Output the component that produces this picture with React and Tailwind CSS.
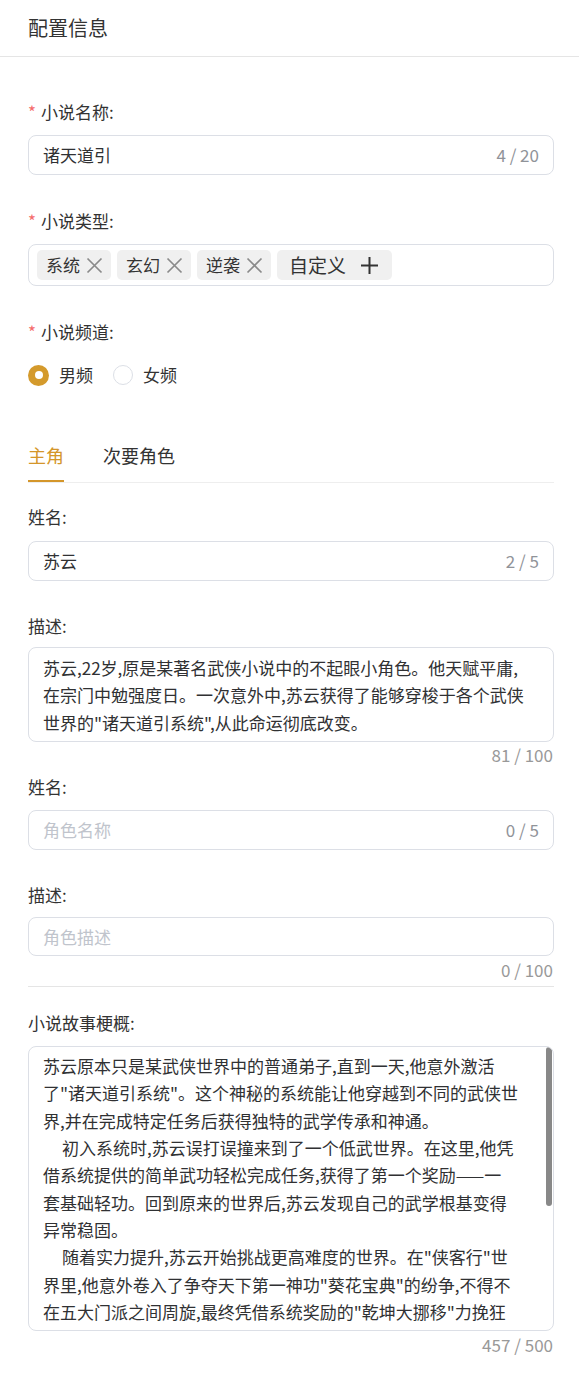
import React from "react";

const XIcon = () => (
  <svg width="17" height="17" viewBox="0 0 17 17" className="shrink-0">
    <path d="M1.5 1.5 L15.5 15.5 M15.5 1.5 L1.5 15.5" stroke="#8a8a8a" strokeWidth="1.7" fill="none" />
  </svg>
);

const PlusIcon = () => (
  <svg width="19" height="19" viewBox="0 0 19 19" className="shrink-0">
    <path d="M9.5 1 L9.5 18 M1 9.5 L18 9.5" stroke="#333333" strokeWidth="2" fill="none" />
  </svg>
);

const Label = ({ required, children, className = "" }) => (
  <div className={"h-[24px] leading-[24px] text-[17px] text-[#333] flex items-center " + className}>
    {required && <span className="text-[#f56c6c] mr-[5px] text-[17px]">*</span>}
    <span>{children}</span>
  </div>
);

const Input = ({ value, placeholder, count, className = "" }) => (
  <div
    className={
      "h-[40px] border border-[#dcdfe6] rounded-[8px] px-[14px] flex items-center justify-between text-[17px] " +
      className
    }
  >
    {value ? (
      <span className="text-[#303133]">{value}</span>
    ) : (
      <span className="text-[#c0c4cc]">{placeholder}</span>
    )}
    <span className="text-[#909399]">{count}</span>
  </div>
);

const Counter = ({ children, className = "" }) => (
  <div className={"h-[20px] leading-[20px] text-right text-[17px] text-[#999] pr-[1px] " + className}>{children}</div>
);

const Tag = ({ text }) => (
  <div className="h-[30px] w-[74px] rounded-[5px] bg-[#f0f0f0] pl-[9px] pr-[8px] flex items-center gap-[6px]">
    <span className="text-[17px] text-[#333] leading-[30px]">{text}</span>
    <XIcon />
  </div>
);

const descLines = [
  "苏云,22岁,原是某著名武侠小说中的不起眼小角色。他天赋平庸,",
  "在宗门中勉强度日。一次意外中,苏云获得了能够穿梭于各个武侠",
  "世界的\"诸天道引系统\",从此命运彻底改变。",
];

const storyLines = [
  { t: "苏云原本只是某武侠世界中的普通弟子,直到一天,他意外激活" },
  { t: "了\"诸天道引系统\"。这个神秘的系统能让他穿越到不同的武侠世" },
  { t: "界,并在完成特定任务后获得独特的武学传承和神通。" },
  { t: "初入系统时,苏云误打误撞来到了一个低武世界。在这里,他凭", indent: true },
  { t: "借系统提供的简单武功轻松完成任务,获得了第一个奖励——一" },
  { t: "套基础轻功。回到原来的世界后,苏云发现自己的武学根基变得" },
  { t: "异常稳固。" },
  { t: "随着实力提升,苏云开始挑战更高难度的世界。在\"侠客行\"世", indent: true },
  { t: "界里,他意外卷入了争夺天下第一神功\"葵花宝典\"的纷争,不得不" },
  { t: "在五大门派之间周旋,最终凭借系统奖励的\"乾坤大挪移\"力挽狂" },
];

export default function App() {
  return (
    <div className="w-[579px] min-h-[1387px] bg-white font-['Noto_Sans_CJK_SC','Noto_Sans',sans-serif] text-[#333]">
      <div className="h-[57px] border-b border-[#e5e5e5] flex items-center pl-[28px] text-[20px] text-[#333]">
        配置信息
      </div>

      <div className="pl-[28px] pr-[25px] pb-[30px]">
        <Label required className="mt-[43px]">小说名称:</Label>
        <Input value="诸天道引" count="4 / 20" className="mt-[11px]" />

        <Label required className="mt-[34px]">小说类型:</Label>
        <div className="mt-[11px] h-[42px] border border-[#dcdfe6] rounded-[8px] px-[8px] flex items-center gap-[6px]">
          <Tag text="系统" />
          <Tag text="玄幻" />
          <Tag text="逆袭" />
          <div className="h-[30px] rounded-[5px] bg-[#f0f0f0] pl-[12px] pr-[13px] flex items-center gap-[14px]">
            <span className="text-[19px] text-[#333] leading-[30px]">自定义</span>
            <PlusIcon />
          </div>
        </div>

        <Label required className="mt-[34px]">小说频道:</Label>
        <div className="mt-[19px] h-[24px] flex items-center gap-[20px] text-[17px]">
          <div className="flex items-center gap-[10px]">
            <div className="w-[21px] h-[21px] rounded-full bg-[#d49a2c] flex items-center justify-center">
              <div className="w-[8px] h-[8px] rounded-full bg-white" />
            </div>
            <span className="text-[#333]">男频</span>
          </div>
          <div className="flex items-center gap-[10px]">
            <div className="w-[20px] h-[20px] rounded-full border border-[#dcdfe6] bg-white" />
            <span className="text-[#333]">女频</span>
          </div>
        </div>

        <div className="mt-[56px] flex gap-[39px] border-b border-[#eeeeee]">
          <div className="h-[39px] border-b-2 border-[#d4962a] -mb-px text-[18px] leading-[24px] text-[#d4962a]">
            主角
          </div>
          <div className="h-[39px] text-[18px] leading-[24px] text-[#333]">次要角色</div>
        </div>

        <Label className="mt-[22px]">姓名:</Label>
        <Input value="苏云" count="2 / 5" className="mt-[12px]" />

        <Label className="mt-[33px]">描述:</Label>
        <div className="mt-[9px] h-[95px] border border-[#dcdfe6] rounded-[8px] px-[14px] pt-[6px] overflow-hidden">
          {descLines.map((l, i) => (
            <div key={i} className="whitespace-nowrap text-[17px] leading-[27.4px] text-[#303133]">
              {l}
            </div>
          ))}
        </div>
        <Counter className="mt-[3px]">81 / 100</Counter>

        <Label className="mt-[10px]">姓名:</Label>
        <Input placeholder="角色名称" count="0 / 5" className="mt-[11px]" />

        <Label className="mt-[33px]">描述:</Label>
        <div className="mt-[10px] h-[39px] border border-[#dcdfe6] rounded-[8px] px-[14px] flex items-center text-[17px] text-[#c0c4cc]">
          角色描述
        </div>
        <Counter className="mt-[4px]">0 / 100</Counter>

        <div className="mt-[6px] h-px bg-[#e5e5e5]" />

        <Label className="mt-[24px]">小说故事梗概:</Label>
        <div className="relative mt-[11px] h-[285px] border border-[#dcdfe6] rounded-[8px] px-[14px] pt-[5px] overflow-hidden">
          {storyLines.map((l, i) => (
            <div
              key={i}
              className={
                "whitespace-nowrap text-[17px] leading-[27.33px] text-[#303133] " + (l.indent ? "pl-[19px]" : "")
              }
            >
              {l.t}
            </div>
          ))}
          <div className="absolute right-[1px] top-0 w-[6px] h-[159px] rounded-full bg-[#888]" />
        </div>
        <Counter className="mt-[4px]">457 / 500</Counter>
      </div>
    </div>
  );
}
